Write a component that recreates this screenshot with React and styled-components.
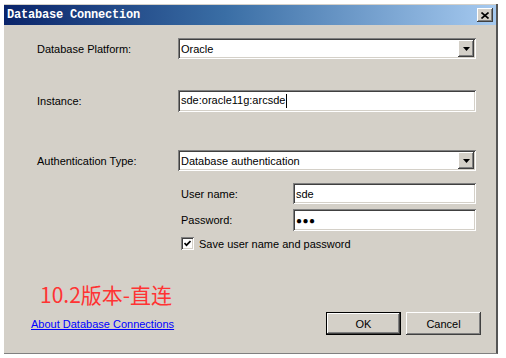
import React from 'react';
import styled, { createGlobalStyle } from 'styled-components';

const GlobalStyle = createGlobalStyle`
   * { box-sizing: border-box; }
   body {
      margin: 0;
      background: #ffffff;
      font-family: "Liberation Sans", Arial, sans-serif;
      font-size: 11px;
      color: #000;
   }
`;

const sunken = `
   box-shadow: inset 1px 1px #808080, inset -1px -1px #ffffff,
      inset 2px 2px #404040, inset -2px -2px #d4d0c8;
`;

const raised = `
   box-shadow: inset -1px -1px #404040, inset 1px 1px #ffffff,
      inset -2px -2px #808080, inset 2px 2px #d4d0c8;
`;

// Window frame
const Window = styled.div`
   margin: 4px 0 0 4px;
   width: 494px;
   height: 350px;
   background: #d4d0c8;
   border-right: 2px solid #555;
   border-bottom: 1px solid #808080;
   display: flex;
   flex-direction: column;
`;

const TitleBar = styled.div`
   height: 20px;
   margin: 1px 0 0 0;
   padding: 0 3px 0 3px;
   display: flex;
   align-items: center;
   justify-content: space-between;
   background: linear-gradient(to right, #0a246a 0%, #3a6ea5 45%, #a6caf0 100%);
`;

const Title = styled.span`
   color: #fff;
   font-family: "Liberation Mono", "DejaVu Sans Mono", monospace;
   font-weight: bold;
   font-size: 12px;
   letter-spacing: -0.2px;
`;

const CloseButton = styled.div`
   width: 16px;
   height: 14px;
   background: #d4d0c8;
   ${raised}
   display: flex;
   align-items: center;
   justify-content: center;
`;

const Body = styled.div`
   flex: 1;
   display: flex;
   flex-direction: column;
   padding: 0 15px 0 33px;
`;

const Row = styled.div`
   display: flex;
   align-items: center;
   margin-top: ${({ top }) => top}px;
`;

const Label = styled.div`
   width: ${({ width }) => width || 141}px;
   flex-shrink: 0;
`;

const Field = styled.div`
   width: ${({ width }) => width}px;
   height: ${({ height }) => height || 21}px;
   background: #fff;
   ${sunken}
   display: flex;
   align-items: center;
   padding: 0 2px 0 3px;
`;

const FieldText = styled.span`
   flex: 1;
   white-space: nowrap;
`;

const Caret = styled.span`
   display: inline-block;
   width: 1px;
   height: 14px;
   background: #000;
   vertical-align: middle;
   margin-left: 1px;
`;

const DropButton = styled.div`
   width: 16px;
   height: 17px;
   background: #d4d0c8;
   ${raised}
   display: flex;
   align-items: center;
   justify-content: center;
`;

const Dots = styled.span`
   font-size: 10px;
   letter-spacing: 0.5px;
`;

const SubSection = styled.div`
   display: flex;
   flex-direction: column;
   padding-left: 144px;
`;

const CheckBox = styled.div`
   width: 13px;
   height: 13px;
   background: #fff;
   ${sunken}
   display: flex;
   align-items: center;
   justify-content: center;
   margin-right: 5px;
`;

const Note = styled.div`
   margin: 31px 0 0 3px;
   font-family: "Noto Sans CJK SC", "Noto Sans", sans-serif;
   font-size: 21px;
   line-height: 26px;
   color: #ff3333;
`;

const Footer = styled.div`
   display: flex;
   align-items: center;
   justify-content: space-between;
   margin-top: 5px;
   margin-left: -6px;
`;

const HelpLink = styled.a`
   color: #0000ff;
   text-decoration: underline;
`;

const Buttons = styled.div`
   display: flex;
   gap: 5px;
`;

const PushButton = styled.div`
   width: 75px;
   height: 23px;
   background: #d4d0c8;
   display: flex;
   align-items: center;
   justify-content: center;
   ${({ isDefault }) => isDefault
      ? `border: 1px solid #000; box-shadow: inset -1px -1px #404040, inset 1px 1px #ffffff, inset -2px -2px #808080;`
      : raised}
`;

const ArrowIcon = () => (
   <svg width="7" height="4" viewBox="0 0 7 4">
      <path d="M0 0H7L3.5 4Z" fill="#000" />
   </svg>
);

const CloseIcon = () => (
   <svg width="8" height="7" viewBox="0 0 8 7">
      <path d="M0.5 0.5L7.5 6.5M7.5 0.5L0.5 6.5" stroke="#000" strokeWidth="1.6" />
   </svg>
);

const CheckIcon = () => (
   <svg width="7" height="7" viewBox="0 0 7 7">
      <path d="M0.5 3L2.5 5.2L6.5 1" stroke="#000" strokeWidth="1.7" fill="none" />
   </svg>
);

const ComboBox = ({ value }) => (
   <Field width={298}>
      <FieldText>{value}</FieldText>
      <DropButton><ArrowIcon /></DropButton>
   </Field>
);

export default function App() {
   return (
      <>
         <GlobalStyle />
         <Window>
            <TitleBar>
               <Title>Database Connection</Title>
               <CloseButton><CloseIcon /></CloseButton>
            </TitleBar>
            <Body>
               <Row top={13}>
                  <Label>Database Platform:</Label>
                  <ComboBox value="Oracle" />
               </Row>
               <Row top={31}>
                  <Label>Instance:</Label>
                  <Field width={298} height={22}>
                     <FieldText>sde:oracle11g:arcsde<Caret /></FieldText>
                  </Field>
               </Row>
               <Row top={38}>
                  <Label>Authentication Type:</Label>
                  <ComboBox value="Database authentication" />
               </Row>
               <SubSection>
                  <Row top={12}>
                     <Label width={112}>User name:</Label>
                     <Field width={183}><FieldText>sde</FieldText></Field>
                  </Row>
                  <Row top={5}>
                     <Label width={112}>Password:</Label>
                     <Field width={183} height={22}><FieldText><Dots>●●●</Dots></FieldText></Field>
                  </Row>
                  <Row top={6}>
                     <CheckBox><CheckIcon /></CheckBox>
                     <span>Save user name and password</span>
                  </Row>
               </SubSection>
               <Note>10.2版本-直连</Note>
               <Footer>
                  <HelpLink href="#">About Database Connections</HelpLink>
                  <Buttons>
                     <PushButton isDefault>OK</PushButton>
                     <PushButton>Cancel</PushButton>
                  </Buttons>
               </Footer>
            </Body>
         </Window>
      </>
   );
}
